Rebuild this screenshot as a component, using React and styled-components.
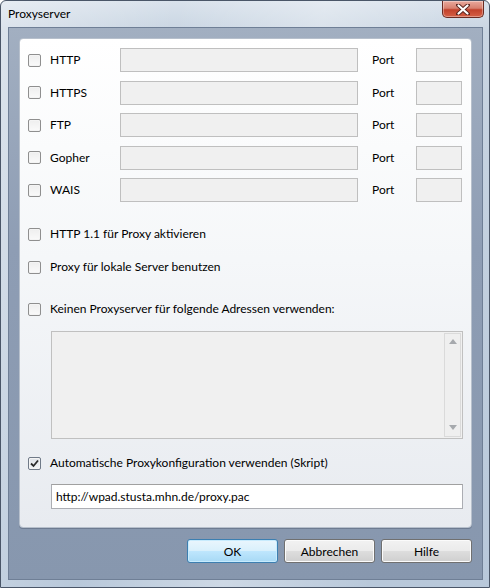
import React from 'react';
import styled, { createGlobalStyle, css } from 'styled-components';

const GlobalStyle = createGlobalStyle`
  html, body {
    margin: 0;
    padding: 0;
    background: #ffffff;
  }

  body {
    font-family: Lato, "Open Sans", "Liberation Sans", sans-serif;
    font-size: 12px;
    color: #000000;
  }
`;

const Window = styled.div`
  width: 490px;
  height: 588px;
  box-sizing: border-box;
  display: flex;
  flex-direction: column;
  border: 1px solid #4a5668;
  border-radius: 6px 6px 0 0;
  background:
    linear-gradient(100deg, rgba(255, 255, 255, 0.35) 0%, rgba(255, 255, 255, 0) 30%, rgba(255, 255, 255, 0.3) 55%, rgba(255, 255, 255, 0) 80%),
    linear-gradient(180deg, #d9e2ec 0%, #c9d5e2 30px, #b8c8da 100%);
  overflow: hidden;
`;

const TitleBar = styled.div`
  height: 26px;
  flex: 0 0 26px;
  display: flex;
  align-items: flex-start;
  justify-content: space-between;
  padding-left: 7px;
`;

const Title = styled.span`
  margin-top: 5px;
  font-size: 12px;
  color: #000000;
`;

const CloseButton = styled.div`
  width: 42px;
  height: 17px;
  margin-right: 5px;
  box-sizing: border-box;
  border: 1px solid #6a2a22;
  border-top: none;
  border-radius: 0 0 5px 5px;
  background: linear-gradient(180deg, #e9a99d 0%, #d7806f 45%, #c2412b 55%, #d55f45 100%);
  display: flex;
  align-items: center;
  justify-content: center;
  box-shadow: inset 0 0 0 1px rgba(255, 255, 255, 0.35);
`;

const Client = styled.div`
  flex: 1;
  margin: 0 6px 7px 7px;
  padding: 10px 10px 15px 10px;
  display: flex;
  flex-direction: column;
  border: 1px solid #6f7f96;
  background: linear-gradient(180deg, #a2afc1 0%, #8e9db4 40%, #8797ae 100%);
`;

const Panel = styled.div`
  padding: 9px 8px 18px 8px;
  border: 1px solid #b7c0cc;
  border-radius: 4px;
  background: linear-gradient(180deg, #ffffff 0%, #f5f7f9 45%, #e8ebf0 100%);
  box-shadow: 0 1px 0 rgba(60, 70, 90, 0.35);
`;

const ProxyGrid = styled.div`
  display: grid;
  grid-template-columns: 13px 79px 238px 58px 46px;
  row-gap: 8.5px;
  align-items: center;
  grid-auto-rows: 24px;
`;

const CheckBox = styled.span`
  display: inline-flex;
  align-items: center;
  justify-content: center;
  width: 13px;
  height: 13px;
  flex: 0 0 13px;
  box-sizing: border-box;
  border: 1px solid #8f8f8f;
  border-radius: 2px;
  background: linear-gradient(180deg, #eeeeee 0%, #fafafa 100%);
  box-shadow: inset 0 0 0 1px #f4f4f4;

  ${props => props.checked && css`
    border-color: #707a88;
    background: linear-gradient(180deg, #dfe3e8 0%, #f2f4f6 100%);
  `}
`;

const Label = styled.span`
  white-space: nowrap;
  line-height: 16px;
  padding-left: ${props => props.indent || 0}px;
`;

const Field = styled.div`
  height: 24px;
  box-sizing: border-box;
  border: 1px solid #bfbfbf;
  background: #f0f0f0;
`;

const OptionRow = styled.div`
  display: flex;
  align-items: center;
  gap: 9px;
  height: 16px;
  margin-top: ${props => props.gap}px;
`;

const AddressBox = styled.div`
  height: 108px;
  margin: 14px 0 0 23px;
  box-sizing: border-box;
  border: 1px solid #c0c0c0;
  background: #f0f0f0;
  display: flex;
  justify-content: flex-end;
  padding: 1px;
`;

const ScrollTrack = styled.div`
  width: 17px;
  box-sizing: border-box;
  border: 1px solid #dadada;
  background: #efefef;
  display: flex;
  flex-direction: column;
  justify-content: space-between;
  align-items: center;
  padding: 5px 0 6px;
`;

const Arrow = styled.span`
  width: 0;
  height: 0;
  border-left: 4px solid transparent;
  border-right: 4px solid transparent;
  ${props => (props.down
    ? css`border-top: 5px solid #a6a9ad;`
    : css`border-bottom: 5px solid #a6a9ad;`)}
`;

const UrlField = styled.div`
  height: 25px;
  margin: 13px 0 0 23px;
  box-sizing: border-box;
  border: 1px solid #abadb3;
  border-top-color: #a0a0a0;
  background: #ffffff;
  padding: 0 4px;
  display: flex;
  align-items: center;
`;

const ButtonRow = styled.div`
  display: flex;
  justify-content: flex-end;
  gap: 6px;
  margin-top: 11px;
`;

const Button = styled.div`
  width: 91px;
  height: 24px;
  box-sizing: border-box;
  border: 1px solid #707070;
  border-radius: 3px;
  display: flex;
  align-items: center;
  justify-content: center;
  background: linear-gradient(180deg, #f2f2f2 0%, #ebebeb 48%, #dddddd 52%, #cfcfcf 100%);
  box-shadow: inset 0 0 0 1px #fbfbfb;

  ${props => props.primary && css`
    border-color: #3c7fb1;
    background: linear-gradient(180deg, #eaf6fd 0%, #d9f0fc 48%, #bee6fd 52%, #a7d9f5 100%);
    box-shadow: inset 0 0 0 1px #c7ebfd;
  `}
`;

const protocols = ['HTTP', 'HTTPS', 'FTP', 'Gopher', 'WAIS'];

const CheckMark = () => (
  <svg width="9" height="9" viewBox="0 0 9 9">
    <path d="M1 4.5 L3.5 7 L8 1.5" fill="none" stroke="#2b2b2b" strokeWidth="1.8" />
  </svg>
);

const CloseGlyph = () => (
  <svg width="14" height="11" viewBox="0 0 14 11">
    <path d="M2 1 L12 10 M12 1 L2 10" stroke="#5a2620" strokeWidth="4" strokeLinecap="round" />
    <path d="M2.5 1.5 L11.5 9.5 M11.5 1.5 L2.5 9.5" stroke="#ffffff" strokeWidth="2.2" strokeLinecap="round" />
  </svg>
);

const App = () => (
  <>
    <GlobalStyle />
    <Window>
      <TitleBar>
        <Title>Proxyserver</Title>
        <CloseButton>
          <CloseGlyph />
        </CloseButton>
      </TitleBar>

      <Client>
        <Panel>
          <ProxyGrid>
            {protocols.map(name => (
              <React.Fragment key={name}>
                <CheckBox />
                <Label indent={9}>{name}</Label>
                <Field />
                <Label indent={14}>Port</Label>
                <Field />
              </React.Fragment>
            ))}
          </ProxyGrid>

          <OptionRow gap={24}>
            <CheckBox />
            <Label>HTTP 1.1 für Proxy aktivieren</Label>
          </OptionRow>

          <OptionRow gap={17}>
            <CheckBox />
            <Label>Proxy für lokale Server benutzen</Label>
          </OptionRow>

          <OptionRow gap={26}>
            <CheckBox />
            <Label>Keinen Proxyserver für folgende Adressen verwenden:</Label>
          </OptionRow>

          <AddressBox>
            <ScrollTrack>
              <Arrow />
              <Arrow down />
            </ScrollTrack>
          </AddressBox>

          <OptionRow gap={16}>
            <CheckBox checked>
              <CheckMark />
            </CheckBox>
            <Label>Automatische Proxykonfiguration verwenden (Skript)</Label>
          </OptionRow>

          <UrlField>http://wpad.stusta.mhn.de/proxy.pac</UrlField>
        </Panel>

        <ButtonRow>
          <Button primary>OK</Button>
          <Button>Abbrechen</Button>
          <Button>Hilfe</Button>
        </ButtonRow>
      </Client>
    </Window>
  </>
);

export default App;
